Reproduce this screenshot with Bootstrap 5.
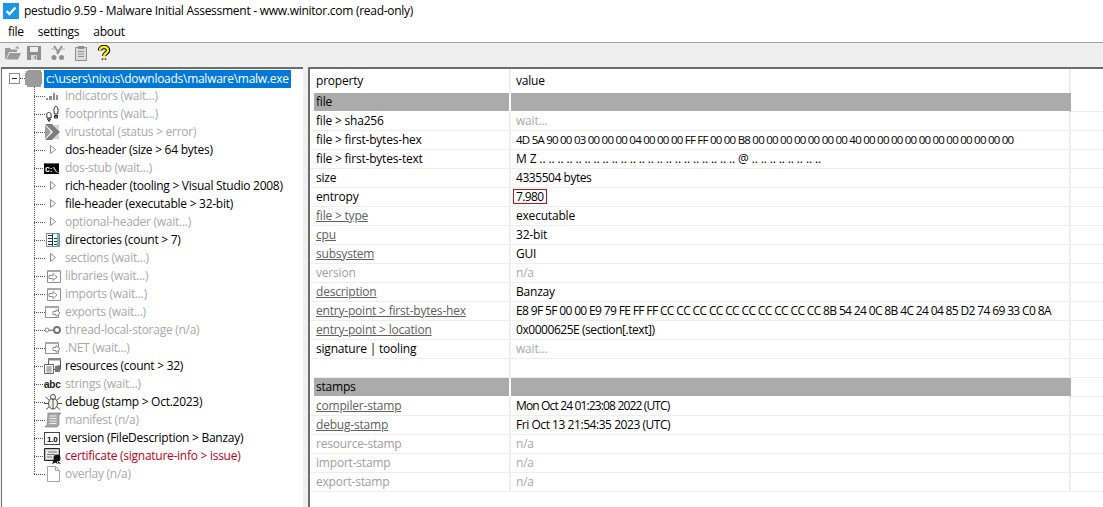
<!DOCTYPE html>
<html lang="en">
<head>
  <meta charset="UTF-8">
  <meta name="viewport" content="width=device-width, initial-scale=1.0">
  <title>pestudio 9.59</title>
  <link href="https://cdn.jsdelivr.net/npm/bootstrap@5.3.0/dist/css/bootstrap.min.css" rel="stylesheet">
  <style>
    html, body { height: 100%; }
    body {
      background: #f0f0f0;
      color: #000;
      font-family: "Open Sans", "Noto Sans", sans-serif;
      font-size: 12px;
      letter-spacing: -0.27px;
      line-height: 18px;
      overflow: hidden;
    }
    .app-window { height: 507px; }
    .title-strip { height: 22px; background: #fff; padding-left: 3px; gap: 5px; }
    .menu-strip { height: 20px; background: #fff; padding-left: 8px; gap: 14px; }
    .tool-strip { height: 25px; border-top: 1px solid #a0a0a0; background: #efefef; padding: 2px 0 0 5px; gap: 8px; }
    .tool-strip svg { display: block; }
    .tool-tight { margin-left: -3px; }
    .split-area { gap: 5px; min-height: 0; padding-left: 1px; }
    .tree-pane { width: 302px; background: #fff; border-left: 1px solid #6d6d6d; border-top: 2px solid #6d6d6d; padding-top: 1px; }
    .table-pane { background: #fff; border-left: 2px solid #6d6d6d; border-top: 2px solid #6d6d6d; min-width: 0; letter-spacing: -0.2px; }

    .tree-root { height: 17px; padding-left: 7px; }
    .minus-box { width: 11px; height: 11px; border: 1px solid #8a8a9a; background: #fff; }
    .minus-box::after { content: ""; display: block; width: 5px; height: 1px; background: #1b2a80; margin: 4px 2px; }
    .root-link { width: 5px; height: 1px; background-image: repeating-linear-gradient(to right, #555 0 1px, transparent 1px 2px); }
    .root-label { background: #0078d7; color: #fff; padding: 0 2px; margin-left: 2px; height: 18px; line-height: 18px; }

    .tree-list { margin: 0; padding: 0; list-style: none; }
    .tree-item {
      height: 18px;
      padding-left: 42px;
      white-space: nowrap;
      background-image: repeating-linear-gradient(to bottom, #555 0 1px, transparent 1px 2px), repeating-linear-gradient(to right, #555 0 1px, transparent 1px 2px);
      background-size: 1px 100%, 11px 1px;
      background-position: 32px 0, 32px 9px;
      background-repeat: no-repeat;
    }
    .tree-item:last-child { background-size: 1px 10px, 11px 1px; }
    .tree-item svg { flex: none; margin-right: 3px; }
    .tree-off { color: #a9a9a9; }
    .tree-bad { color: #c00020; }

    .prop-table { table-layout: fixed; width: 100%; margin: 0; border-collapse: separate; border-spacing: 0; }
    .prop-table td {
      height: 19px;
      padding: 0 0 0 5px;
      border: 0;
      border-bottom: 1px solid #eeeeee;
      border-right: 2px solid #eeeeee;
      background: #fff;
      color: #000;
      white-space: nowrap;
      overflow: hidden;
      line-height: 17px;
      box-shadow: none;
    }
    .prop-table td:first-child { padding-left: 6px; width: 201px; }
    .prop-table td:last-child { border-right: 0; }
    .prop-table .head-row td { height: 24px; border-bottom: 0; vertical-align: middle; padding-bottom: 2px; }
    .prop-table .band-row td { height: 19px; background: #ababab; border-bottom-color: #fff; }
    .prop-table .band-row td:first-child { border-left: 4px solid #fff; padding-left: 2px; border-right-color: #fff; }
    .prop-table .band-row td:nth-child(2) { border-right-color: #ababab; }
    .prop-table .band-row td:last-child { background: #fff; border-bottom-color: #eeeeee; }
    .prop-table td.val-off { color: #a9a9a9; }
    .prop-table td.key-under { color: #606060; text-decoration: underline; }
    .prop-table td.key-off { color: #a0a0a0; }
    .prop-table td.spaced-zeros { font-size: 11.5px; letter-spacing: -0.76px; }
    .prop-table td.spaced-hex { letter-spacing: -0.64px; }
    .prop-table td.spaced-num { letter-spacing: -0.45px; }
    .prop-table td.spaced-mon { letter-spacing: -0.85px; }
    .prop-table td.spaced-dots { letter-spacing: -0.13px; }
    .entropy-box { display: inline-block; border: 1px solid #c81414; margin-left: -3px; padding: 0 2px; line-height: 13px; height: 15px; letter-spacing: -0.6px; }
    .col-key { width: 201px; }
    .col-val { width: 560px; }
  </style>
</head>
<body>
  <svg width="0" height="0" class="d-none">
    <symbol id="i-tri" viewBox="0 0 18 16"><path d="M6.500 3.500v8l5-4z" fill="#fff" stroke="#8c8c8c"/></symbol>
    <symbol id="i-bars" viewBox="0 0 18 16"><path d="M2 10h2v2H2zM5 8h3v4H5zM9 5h2v7H9zM12 7h2v5h-2z" fill="#8f8f8f"/></symbol>
    <symbol id="i-feet" viewBox="0 0 18 16"><path d="M4.500 6.500c2.500 0 3 1.500 2.500 5.500H3c-.5-4 0-5.500 1.500-5.500zM3.500 13h3L5 15.500z" fill="#fff" stroke="#222"/><path d="M12 .5c1.500 0 2 1.500 2 4 0 2-.5 3.500-.5 3.500h-3s-.5-1.500-.5-3.500c0-2.500.5-4 2-4zM10.500 9.500h3V12h-3z" fill="#fff" stroke="#222"/><path d="M11 10h2v2h-2z" fill="#777"/></symbol>
    <symbol id="i-vt" viewBox="0 0 18 16"><path d="M1 0h7l8 8-8 8H1l8-8z" fill="#7c7c7c"/><path d="M1 1l6 7-6 7z" fill="#9a9a9a"/><path d="M9 1h6v5zM9 15h6v-5z" fill="#d5d5d5"/></symbol>
    <symbol id="i-win" viewBox="0 0 18 16"><path d="M3.500 2.500h13v12h-13z" fill="#fff" stroke="#8f8f8f"/><path d="M3 2h14v2H3z" fill="#a8a8a8"/><path d="M5 7.500h4v-2l4 3.500-4 3.500v-2H5z" fill="#fff" stroke="#8f8f8f"/></symbol>
    <symbol id="i-exp" viewBox="0 0 18 16"><path d="M1.500 2.500h13v11h-13z" fill="#fff" stroke="#8f8f8f"/><path d="M1 2h14v2H1z" fill="#a8a8a8"/><path d="M9 7.500h3v-2l4 3.500-4 3.500v-2H9z" fill="#fff" stroke="#8f8f8f"/></symbol>
    <symbol id="i-key" viewBox="0 0 18 16"><circle cx="13" cy="8" r="3" fill="#fff" stroke="#777" stroke-width="2"/><path d="M1 7.500h9V9H1z" fill="#888"/><circle cx="3" cy="8" r="2" fill="#fff" stroke="#888"/></symbol>
    <symbol id="i-res" viewBox="0 0 18 16"><path d="M4.500 .5h12v11h-12z" fill="#fff" stroke="#555"/><path d="M4 0h13v2.500H4z" fill="#888"/><path d="M.5 6.500h9v9h-9z" fill="#fff" stroke="#666"/><path d="M2 9h6M2 11h6M2 13h6M4 8v7M6 8v7" stroke="#888" stroke-width=".8"/><path d="M11 8l5-1v7h-5z" fill="#777"/></symbol>
    <symbol id="i-grid" viewBox="0 0 18 16"><path d="M2.500 1.500h13v13h-13z" fill="#fff" stroke="#7a8a9a"/><path d="M4 3.500h4M4 6.500h4M10 6.500h3M4 9.500h4M10 9.500h3M4 12.500h4M10 12.500h3" stroke="#1a2fb0"/><path d="M8.500 2v12" stroke="#333"/><path d="M13 2h2v12h-2z" fill="#2a9a88" opacity=".7"/></symbol>
    <symbol id="i-bug" viewBox="0 0 18 16"><ellipse cx="9" cy="9.500" rx="4.500" ry="5.500" fill="#f2f2e6" stroke="#444"/><circle cx="9" cy="3" r="2.500" fill="#fff" stroke="#444"/><path d="M9 4v11M5 6L1.500 3M13 6l3.500-3M4.500 9.500H0M13.500 9.500H18M5 13l-3 2.500M13 13l3 2.500" stroke="#555" fill="none"/></symbol>
    <symbol id="i-man" viewBox="0 0 18 16"><path d="M4 1h13l-2 2v10l-2 2H1l2-2z" fill="#a8a8a8" stroke="#777" stroke-width=".6"/><path d="M5.500 4h7M5.500 6.500h7M5.500 9h7M5.500 11.500h7" stroke="#eee"/></symbol>
    <symbol id="i-cert" viewBox="0 0 18 16"><path d="M.5 .5h15v12H.5z" fill="#fff" stroke="#222"/><path d="M1.500 1.500h13v10h-13z" fill="#e8e8e8" stroke="#999" stroke-width=".6"/><path d="M4 4h9M3 6.500h8M3 9h5" stroke="#777"/><circle cx="13" cy="10" r="3.500" fill="#111"/><path d="M10 11l-2 5 3.500-1.500 2 1.500 1-3.500zM13 12l4 4-4-1z" fill="#111"/></symbol>
    <symbol id="i-page" viewBox="0 0 18 16"><path d="M3.500 .5h8l4 4v11h-12z" fill="#fff" stroke="#a5a5a5"/><path d="M11.500 .5v4h4" fill="none" stroke="#a5a5a5"/></symbol>
  </svg>

  <div class="app-window d-flex flex-column">
    <div class="title-strip d-flex align-items-center">
      <svg width="16" height="16" viewBox="0 0 16 16"><rect width="16" height="16" fill="#1797e8"/><path d="M3.500 8l3 3 6-6.500" fill="none" stroke="#fff" stroke-width="2.400"/></svg>
      <span>pestudio 9.59 - Malware Initial Assessment - www.winitor.com (read-only)</span>
    </div>
    <div class="menu-strip d-flex align-items-center">
      <span>file</span><span>settings</span><span>about</span>
    </div>
    <div class="tool-strip d-flex align-items-start">
      <svg width="16" height="16" viewBox="0 0 16 16"><path d="M0 14V3h5l1 1.500h6V7H4L1 14zM1.500 14.500L4.500 8H16l-3 6.500z" fill="#9a9a9a"/><path d="M10 3l3-2 1 3z" fill="#9a9a9a"/></svg>
      <svg width="16" height="16" class="tool-tight" viewBox="0 0 16 16"><path d="M1 1h14v14H1z" fill="#8f8f8f"/><path d="M4 2h8v5H4z" fill="#efefef"/><path d="M5 10h6v5H5z" fill="#d8d8d8"/><path d="M8.500 11H10v3H8.500z" fill="#8f8f8f"/></svg>
      <svg width="16" height="16" viewBox="0 0 16 16"><path d="M4 1l5 7M12 1L7 9" stroke="#8f8f8f" stroke-width="2"/><path d="M1 4h6M10 4h5" stroke="#b5b5b5"/><circle cx="4" cy="12.500" r="2.500" fill="#8f8f8f"/><circle cx="11.500" cy="12.500" r="2.500" fill="#8f8f8f"/></svg>
      <svg width="15" height="16" viewBox="0 0 15 16"><path d="M1.500 2.500h11v13h-11z" fill="#dcdcdc" stroke="#8f8f8f"/><path d="M4 1h6v3H4z" fill="#8f8f8f"/><path d="M4 6.500h6M4 9h6M4 11.500h6" stroke="#8f8f8f"/></svg>
      <svg width="14" height="17" viewBox="0 0 14 17"><path d="M3 5.500C3 3 5 2 7 2s4 1 4 3.500S7.500 8 7 11M7 13.500V15" fill="none" stroke="#000" stroke-width="4.500"/><path d="M3 5.500C3 3 5 2 7 2s4 1 4 3.500S7.500 8 7 11M7 13.500V15" fill="none" stroke="#ffee00" stroke-width="2.400"/></svg>
    </div>

    <div class="split-area d-flex flex-grow-1">
      <div class="tree-pane flex-shrink-0">
        <div class="tree-root d-flex align-items-center">
          <span class="minus-box"></span><span class="root-link"></span>
          <svg width="17" height="17" viewBox="0 0 17 17"><path d="M1 1h2V0h13v2h1v12h-1v3H2v-2H0V3h1z" fill="#9a9a9a"/></svg>
          <span class="root-label">c:\users\nixus\downloads\malware\malw.exe</span>
        </div>
        <ul class="tree-list">
          <li class="tree-item tree-off d-flex align-items-center"><svg width="18" height="16"><use href="#i-bars"/></svg>indicators (wait...)</li>
          <li class="tree-item tree-off d-flex align-items-center"><svg width="18" height="16"><use href="#i-feet"/></svg>footprints (wait...)</li>
          <li class="tree-item tree-off d-flex align-items-center"><svg width="18" height="16"><use href="#i-vt"/></svg>virustotal (status &gt; error)</li>
          <li class="tree-item d-flex align-items-center"><svg width="18" height="16"><use href="#i-tri"/></svg>dos-header (size &gt; 64 bytes)</li>
          <li class="tree-item tree-off d-flex align-items-center"><svg width="18" height="16" viewBox="0 0 18 16"><rect x="0" y="3" width="15" height="11" fill="#000"/><rect x="0" y="3" width="15" height="1" fill="#666"/><text x="1" y="12" font-size="8" font-weight="700" fill="#fff" font-family="Liberation Mono, monospace" letter-spacing="-1">C:\_</text></svg>dos-stub (wait...)</li>
          <li class="tree-item d-flex align-items-center"><svg width="18" height="16"><use href="#i-tri"/></svg>rich-header (tooling &gt; Visual Studio 2008)</li>
          <li class="tree-item d-flex align-items-center"><svg width="18" height="16"><use href="#i-tri"/></svg>file-header (executable &gt; 32-bit)</li>
          <li class="tree-item tree-off d-flex align-items-center"><svg width="18" height="16"><use href="#i-tri"/></svg>optional-header (wait...)</li>
          <li class="tree-item d-flex align-items-center"><svg width="18" height="16"><use href="#i-grid"/></svg>directories (count &gt; 7)</li>
          <li class="tree-item tree-off d-flex align-items-center"><svg width="18" height="16"><use href="#i-tri"/></svg>sections (wait...)</li>
          <li class="tree-item tree-off d-flex align-items-center"><svg width="18" height="16"><use href="#i-win"/></svg>libraries (wait...)</li>
          <li class="tree-item tree-off d-flex align-items-center"><svg width="18" height="16"><use href="#i-win"/></svg>imports (wait...)</li>
          <li class="tree-item tree-off d-flex align-items-center"><svg width="18" height="16"><use href="#i-exp"/></svg>exports (wait...)</li>
          <li class="tree-item tree-off d-flex align-items-center"><svg width="18" height="16"><use href="#i-key"/></svg>thread-local-storage (n/a)</li>
          <li class="tree-item tree-off d-flex align-items-center"><svg width="18" height="16"><use href="#i-exp"/></svg>.NET (wait...)</li>
          <li class="tree-item d-flex align-items-center"><svg width="18" height="16"><use href="#i-res"/></svg>resources (count &gt; 32)</li>
          <li class="tree-item tree-off d-flex align-items-center"><svg width="18" height="16" viewBox="0 0 18 16"><text x="0" y="12" font-size="10" font-weight="700" fill="#222" font-family="Liberation Sans, sans-serif">abc</text></svg>strings (wait...)</li>
          <li class="tree-item d-flex align-items-center"><svg width="18" height="16"><use href="#i-bug"/></svg>debug (stamp &gt; Oct.2023)</li>
          <li class="tree-item tree-off d-flex align-items-center"><svg width="18" height="16"><use href="#i-man"/></svg>manifest (n/a)</li>
          <li class="tree-item d-flex align-items-center"><svg width="18" height="16" viewBox="0 0 18 16"><rect x=".5" y="2.500" width="15" height="12" fill="#fff" stroke="#444"/><text x="3" y="11.500" font-size="8" font-weight="700" fill="#000" font-family="Liberation Sans, sans-serif">1.0</text></svg>version (FileDescription &gt; Banzay)</li>
          <li class="tree-item tree-bad d-flex align-items-center"><svg width="18" height="16"><use href="#i-cert"/></svg>certificate (signature-info &gt; issue)</li>
          <li class="tree-item tree-off d-flex align-items-center"><svg width="18" height="16"><use href="#i-page"/></svg>overlay (n/a)</li>
        </ul>
      </div>

      <div class="table-pane flex-grow-1">
        <table class="table prop-table">
          <colgroup><col class="col-key"><col class="col-val"><col></colgroup>
          <tbody>
            <tr class="head-row"><td>property</td><td>value</td><td></td></tr>
            <tr class="band-row"><td>file</td><td></td><td></td></tr>
            <tr><td>file &gt; sha256</td><td class="val-off">wait...</td><td></td></tr>
            <tr><td>file &gt; first-bytes-hex</td><td class="spaced-zeros">4D 5A 90 00 03 00 00 00 04 00 00 00 FF FF 00 00 B8 00 00 00 00 00 00 00 40 00 00 00 00 00 00 00 00 00 00 00</td><td></td></tr>
            <tr><td>file &gt; first-bytes-text</td><td class="spaced-dots">M Z .. .. .. .. .. .. .. .. .. .. .. .. .. .. .. .. .. .. .. .. .. .. @ .. .. .. .. .. .. .. ..</td><td></td></tr>
            <tr><td>size</td><td class="spaced-num">4335504 bytes</td><td></td></tr>
            <tr><td>entropy</td><td><span class="entropy-box">7.980</span></td><td></td></tr>
            <tr><td class="key-under">file &gt; type</td><td>executable</td><td></td></tr>
            <tr><td class="key-under">cpu</td><td>32-bit</td><td></td></tr>
            <tr><td class="key-under">subsystem</td><td>GUI</td><td></td></tr>
            <tr><td class="key-off">version</td><td class="val-off">n/a</td><td></td></tr>
            <tr><td class="key-under">description</td><td>Banzay</td><td></td></tr>
            <tr><td class="key-under">entry-point &gt; first-bytes-hex</td><td class="spaced-hex">E8 9F 5F 00 00 E9 79 FE FF FF CC CC CC CC CC CC CC CC CC CC 8B 54 24 0C 8B 4C 24 04 85 D2 74 69 33 C0 8A</td><td></td></tr>
            <tr><td class="key-under">entry-point &gt; location</td><td class="spaced-num">0x0000625E (section[.text])</td><td></td></tr>
            <tr><td>signature | tooling</td><td class="val-off">wait...</td><td></td></tr>
            <tr><td></td><td></td><td></td></tr>
            <tr class="band-row"><td>stamps</td><td></td><td></td></tr>
            <tr><td class="key-under">compiler-stamp</td><td class="spaced-mon">Mon Oct 24 01:23:08 2022 (UTC)</td><td></td></tr>
            <tr><td class="key-under">debug-stamp</td><td class="spaced-num">Fri Oct 13 21:54:35 2023 (UTC)</td><td></td></tr>
            <tr><td class="key-off">resource-stamp</td><td class="val-off">n/a</td><td></td></tr>
            <tr><td class="key-off">import-stamp</td><td class="val-off">n/a</td><td></td></tr>
            <tr><td class="key-off">export-stamp</td><td class="val-off">n/a</td><td></td></tr>
          </tbody>
        </table>
      </div>
    </div>
  </div>
  <script src="https://cdn.jsdelivr.net/npm/bootstrap@5.3.0/dist/js/bootstrap.bundle.min.js"></script>
</body>
</html>
